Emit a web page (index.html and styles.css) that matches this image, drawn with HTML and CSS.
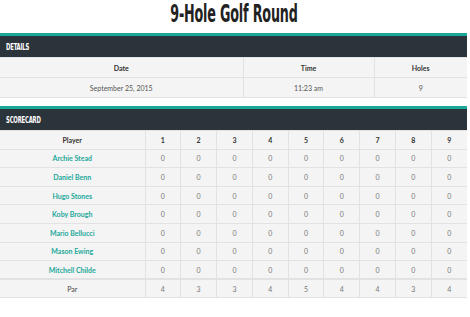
FILE: index.html
```html
<!DOCTYPE html>
<html>
<head>
<meta charset="utf-8">
<link rel="stylesheet" href="styles.css">
</head>
<body>
<div class="page">
  <h1 class="title"><span class="narrow">9-Hole Golf Round</span></h1>

  <section class="panel">
    <div class="panel-head"><span class="narrow-left">Details</span></div>
    <table class="grid details">
      <colgroup><col class="c-date"><col class="c-time"><col class="c-holes"></colgroup>
      <thead><tr><th>Date</th><th>Time</th><th>Holes</th></tr></thead>
      <tbody><tr><td>September 25, 2015</td><td>11:23 am</td><td>9</td></tr></tbody>
    </table>
  </section>

  <section class="panel">
    <div class="panel-head"><span class="narrow-left">Scorecard</span></div>
    <table class="grid score">
      <colgroup><col class="c-player"><col span="9" class="c-hole"></colgroup>
      <thead>
        <tr><th>Player</th><th>1</th><th>2</th><th>3</th><th>4</th><th>5</th><th>6</th><th>7</th><th>8</th><th>9</th></tr>
      </thead>
      <tbody>
        <tr><td class="name">Archie Stead</td><td>0</td><td>0</td><td>0</td><td>0</td><td>0</td><td>0</td><td>0</td><td>0</td><td>0</td></tr>
        <tr><td class="name">Daniel Benn</td><td>0</td><td>0</td><td>0</td><td>0</td><td>0</td><td>0</td><td>0</td><td>0</td><td>0</td></tr>
        <tr><td class="name">Hugo Stones</td><td>0</td><td>0</td><td>0</td><td>0</td><td>0</td><td>0</td><td>0</td><td>0</td><td>0</td></tr>
        <tr><td class="name">Koby Brough</td><td>0</td><td>0</td><td>0</td><td>0</td><td>0</td><td>0</td><td>0</td><td>0</td><td>0</td></tr>
        <tr><td class="name">Mario Bellucci</td><td>0</td><td>0</td><td>0</td><td>0</td><td>0</td><td>0</td><td>0</td><td>0</td><td>0</td></tr>
        <tr><td class="name">Mason Ewing</td><td>0</td><td>0</td><td>0</td><td>0</td><td>0</td><td>0</td><td>0</td><td>0</td><td>0</td></tr>
        <tr><td class="name">Mitchell Childe</td><td>0</td><td>0</td><td>0</td><td>0</td><td>0</td><td>0</td><td>0</td><td>0</td><td>0</td></tr>
      </tbody>
      <tfoot>
        <tr><td class="par">Par</td><td>4</td><td>3</td><td>3</td><td>4</td><td>5</td><td>4</td><td>4</td><td>3</td><td>4</td></tr>
      </tfoot>
    </table>
  </section>
</div>
</body>
</html>
```
FILE: styles.css
```css
* { box-sizing: border-box; }
html, body { margin: 0; padding: 0; background: #fff; }
body { font-family: Lato, "Open Sans", sans-serif; color: #444; }

.page { width: 467px; }

.title {
  margin: 0;
  height: 33px;
  padding-top: 1px;
  text-align: center;
  font-family: "DejaVu Sans Condensed", "DejaVu Sans", sans-serif;
  font-weight: bold;
  font-size: 24px;
  line-height: 26px;
  color: #222;
}
.narrow {
  display: inline-block;
  transform: scaleX(0.59);
  transform-origin: center;
  letter-spacing: -0.3px;
}

.panel { border-top: 3px solid #1ba89a; margin-bottom: 8px; }

.panel-head {
  height: 21px;
  background: #2b333b;
  color: #fff;
  padding-left: 6px;
  font-family: "DejaVu Sans Condensed", "DejaVu Sans", sans-serif;
  font-weight: bold;
  font-size: 9.5px;
  line-height: 21px;
  text-transform: uppercase;
}
.narrow-left {
  display: inline-block;
  transform: scaleX(0.62);
  transform-origin: left center;
  letter-spacing: -0.3px;
}

.grid {
  width: 100%;
  border-collapse: collapse;
  table-layout: fixed;
  font-size: 7px;
}
.grid th, .grid td {
  background: #f4f4f4;
  border: 1px solid #e2e2e2;
  text-align: center;
  padding: 0;
  color: #555;
}
.grid tr > :first-child { border-left: none; }
.grid tr > :last-child { border-right: none; }
.grid th { font-weight: bold; color: #333; }

.details th, .details td { height: 20px; }
.details td { color: #555; }
.c-date { width: 243px; }
.c-time { width: 131px; }

.score th, .score td { height: 18.6px; }
.score td { color: #777; }
.c-player { width: 145px; }
.score td.name { color: #1ba89a; font-weight: bold; }
.score td.par { color: #444; }
.score tfoot td { border-top: 2px solid #e2e2e2; }
```
